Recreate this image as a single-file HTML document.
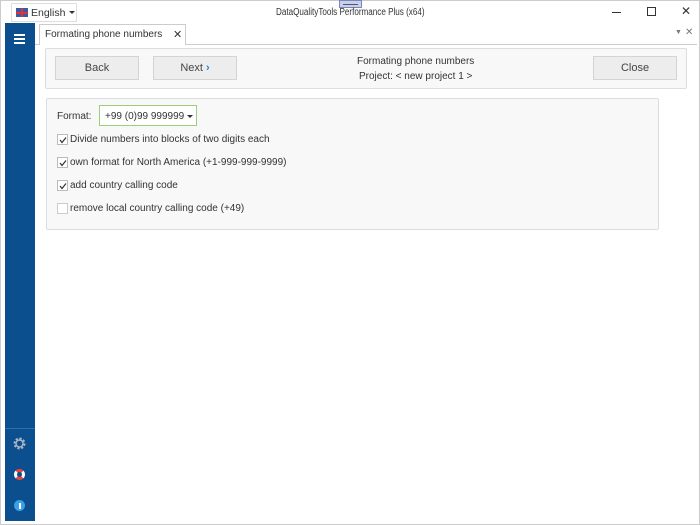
<!DOCTYPE html>
<html><head><style>
*{box-sizing:border-box;margin:0;padding:0}
body{width:700px;height:525px;background:#fff;font-family:"Liberation Sans",sans-serif;font-size:10px;color:#333;position:relative;overflow:hidden}
.a{position:absolute;white-space:nowrap}
.btn{position:absolute;background:#ededed;border:1px solid #d4d4d4;text-align:center;line-height:23px;font-size:11px;color:#444}
.cb{position:absolute;left:57px;width:11px;height:11px;border:1px solid #bbb;background:#fff}
.cb svg{position:absolute;left:1px;top:1px}
.lbl{position:absolute;left:70px;font-size:10px;color:#333;white-space:nowrap}
</style></head><body>
<div class="a" style="left:0;top:0;width:700px;height:525px;border:1px solid #ccc"></div>
<div class="a" style="left:11px;top:3px;width:66px;height:19px;border:1px solid #ddd;background:#fff"></div>
<div class="a" style="left:16px;top:8px;width:12px;height:9px;background:#3a5aa8"><div class="a" style="left:5px;top:0;width:2px;height:9px;background:#d33"></div><div class="a" style="left:0;top:4px;width:12px;height:2px;background:#d33"></div></div>
<div class="a" style="left:31px;top:7px;font-size:10.5px;color:#333">English</div>
<div class="a" style="left:69px;top:11px;border-left:3px solid transparent;border-right:3px solid transparent;border-top:3px solid #333"></div>
<div class="a" style="left:339px;top:0;width:23px;height:8px;background:#c8cfe8;border:1px solid #7a86c0"><div class="a" style="left:3px;top:3px;width:15px;height:1px;background:#556"></div></div>
<div class="a" style="left:276px;top:7px;font-size:10px;color:#333;transform:scaleX(0.81);transform-origin:left">DataQualityTools Performance Plus (x64)</div>
<div class="a" style="left:612px;top:12px;width:9px;height:1px;background:#333"></div>
<div class="a" style="left:647px;top:7px;width:9px;height:9px;border:1px solid #333"></div>
<div class="a" style="left:681px;top:4px;font-size:12px;color:#333">✕</div>
<div class="a" style="left:5px;top:23px;width:30px;height:498px;background:#0c4f8f"></div>
<div class="a" style="left:14px;top:34px;width:11px;height:2px;background:#fff"></div>
<div class="a" style="left:14px;top:38px;width:11px;height:2px;background:#fff"></div>
<div class="a" style="left:14px;top:42px;width:11px;height:2px;background:#fff"></div>
<div class="a" style="left:5px;top:428px;width:30px;height:1px;background:#2a6fb0"></div>
<svg class="a" style="left:13px;top:437px" width="13" height="13" viewBox="0 0 13 13"><circle cx="6.5" cy="6.5" r="4.5" fill="none" stroke="#aab4c4" stroke-width="3" stroke-dasharray="2 1.5"/><circle cx="6.5" cy="6.5" r="3.5" fill="none" stroke="#aab4c4" stroke-width="1.5"/></svg>
<div class="a" style="left:14px;top:469px;width:11px;height:11px;border-radius:50%;border:3px solid #e8453c;border-left-color:#fff;border-right-color:#fff"></div>
<div class="a" style="left:14px;top:500px;width:11px;height:11px;border-radius:50%;background:#3aa0e8"><div class="a" style="left:4.5px;top:3px;width:2px;height:6px;background:#fff"></div></div>
<div class="a" style="left:35px;top:44px;width:662px;height:1px;background:#ccc"></div>
<div class="a" style="left:39px;top:24px;width:147px;height:21px;border:1px solid #ccc;border-bottom:none;background:#fff"></div>
<div class="a" style="left:45px;top:29px;font-size:10px;color:#333">Formating phone numbers</div>
<div class="a" style="left:173px;top:28px;font-size:11px;color:#333">✕</div>
<div class="a" style="left:675px;top:29px;font-size:7px;color:#777">▼</div>
<div class="a" style="left:685px;top:27px;font-size:10px;color:#777">✕</div>
<div class="a" style="left:45px;top:48px;width:642px;height:41px;border:1px solid #ddd;background:#f8f8f8;border-radius:2px"></div>
<div class="btn" style="left:55px;top:56px;width:84px;height:24px">Back</div>
<div class="btn" style="left:153px;top:56px;width:84px;height:24px">Next <span style="color:#1e88d8;font-weight:bold">›</span></div>
<div class="btn" style="left:593px;top:56px;width:84px;height:24px">Close</div>
<div class="a" style="left:357px;top:56px;font-size:10px;color:#333">Formating phone numbers</div>
<div class="a" style="left:359px;top:71px;font-size:10px;color:#333">Project: &lt; new project 1 &gt;</div>
<div class="a" style="left:46px;top:98px;width:613px;height:132px;border:1px solid #ddd;background:#f8f8f8;border-radius:2px"></div>
<div class="a" style="left:57px;top:111px">Format:</div>
<div class="a" style="left:99px;top:105px;width:98px;height:21px;border:1px solid #9ccf7a;background:#fff"></div>
<div class="a" style="left:105px;top:111px">+99 (0)99 999999</div>
<div class="a" style="left:187px;top:115px;border-left:3px solid transparent;border-right:3px solid transparent;border-top:3px solid #333"></div>
<div class="cb" style="top:134px"><svg width="8" height="8"><path d="M1 4 L3 6.5 L7 1.5" stroke="#333" stroke-width="1.2" fill="none"/></svg></div>
<div class="lbl" style="top:134px">Divide numbers into blocks of two digits each</div>
<div class="cb" style="top:157px"><svg width="8" height="8"><path d="M1 4 L3 6.5 L7 1.5" stroke="#333" stroke-width="1.2" fill="none"/></svg></div>
<div class="lbl" style="top:157px">own format for North America (+1-999-999-9999)</div>
<div class="cb" style="top:180px"><svg width="8" height="8"><path d="M1 4 L3 6.5 L7 1.5" stroke="#333" stroke-width="1.2" fill="none"/></svg></div>
<div class="lbl" style="top:180px">add country calling code</div>
<div class="cb" style="top:203px;border-color:#ccc"></div>
<div class="lbl" style="top:203px">remove local country calling code (+49)</div>
</body></html>
